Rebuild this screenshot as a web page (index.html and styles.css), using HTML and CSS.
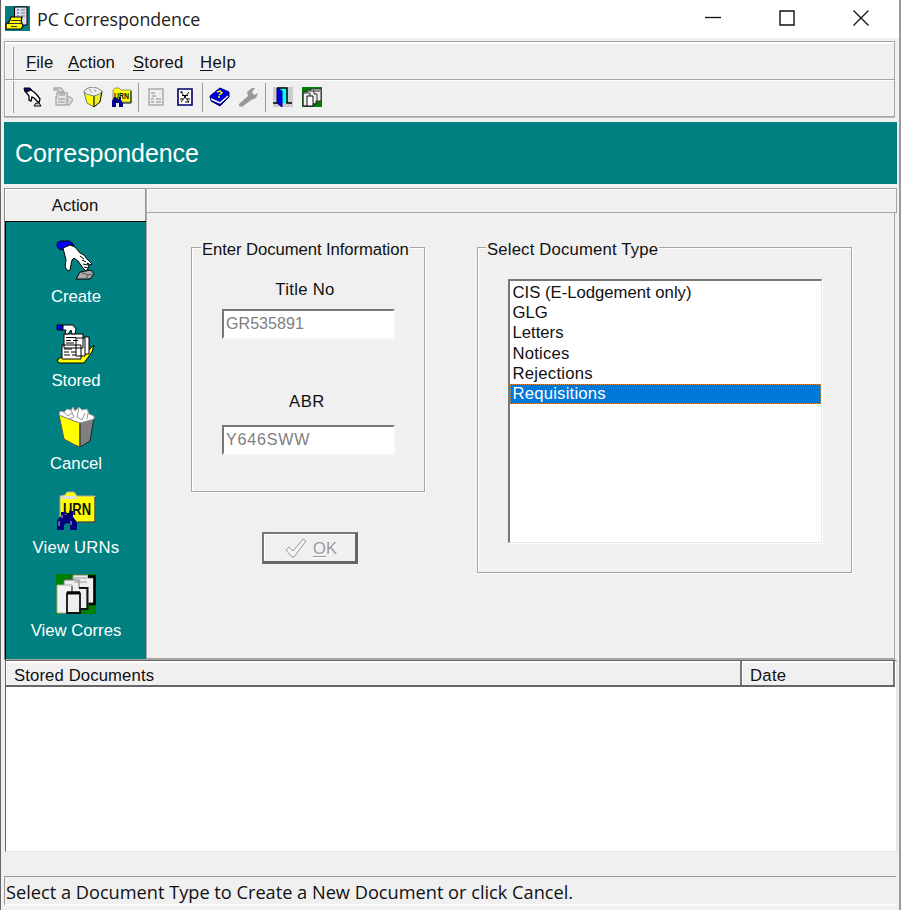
FILE: index.html
```html
<!DOCTYPE html>
<html lang="en">
<head>
<meta charset="utf-8">
<title>PC Correspondence</title>
<link rel="stylesheet" href="styles.css">
</head>
<body>
<svg class="defs" width="0" height="0">
  <defs>
    <symbol id="hand" viewBox="0 0 40 40">
      <path d="M1 5Q1 1 6 1H13Q18 3 18 6L14 5L8 8L6 10Q1 9 1 5Z" fill="#00f" stroke="#000"/>
      <path d="M7 8L14 5L19 7L24 13L28 15L31 19L36 24L35 25L31 23L33 27L30 31L27 28L22 21L18 18L16 20L14 30L12 31L9 27L10 20Z" fill="#fff" stroke="#000"/>
      <path d="M24 16L28 19M26 20L30 22M27 24L31 25M28 27L32 28" stroke="#000" fill="none"/>
      <path d="M24 32L35 30L38 34L34 39H20Z" fill="#aaa" stroke="#000"/>
      <path d="M24 32L32 35L38 34M32 35L30 39" fill="none" stroke="#555"/>
    </symbol>
    <symbol id="stored" viewBox="0 0 40 40">
      <path d="M1 36L7 32H26L38 21L36 28L28 39H3Z" fill="#ff0" stroke="#000"/>
      <path d="M24 13H33V30H24Z" fill="#fff" stroke="#000"/>
      <path d="M20 14H29V32H20ZM8 10H27V24H8ZM6 21H25V35H6Z" fill="#fff" stroke="#000"/>
      <path d="M10 13.500H20M10 16.500H15M17 16.500H22M10 19H18M8 25H16M8 28H13M15 28H20M8 31H14M16 31H20" stroke="#000" fill="none"/>
      <path d="M1 1H7V6H1Z" fill="#00f" stroke="#000"/>
      <path d="M7 1H17L20 5L19 10H16L15 6L12 10H9L10 6H7Z" fill="#fff" stroke="#000"/>
    </symbol>
    <symbol id="bin" viewBox="0 0 40 40">
      <path d="M3 8L24 16V40L19 38L8 32Z" fill="#ff0" stroke="#555"/>
      <path d="M24 16L38 11L34 34L24 40Z" fill="#808080" stroke="#222"/>
      <path d="M3 8L4 4L8 5L11 2L15 3L17 0L19 4L23 0L26 3L31 2L33 7L38 9L38 12L24 16Z" fill="#fff" stroke="#999"/>
      <path d="M8 5L12 9L16 6M15 3L18 10L13 12M23 1L21 10L26 13L29 6M32 6L31 12" fill="none" stroke="#999"/>
    </symbol>
    <symbol id="urn" viewBox="0 0 40 40">
      <path d="M4 30V5L9 4L11 1H18L21 5H39V31H25" fill="#ff0" stroke="#aaa"/>
      <path d="M5 5H20L22 8H6Z" fill="#ddd"/>
      <path d="M39 6V31H22" fill="none" stroke="#222"/>
      <text x="7" y="24" font-size="16" textLength="28" lengthAdjust="spacingAndGlyphs">URN</text>
      <path d="M5 21H9V24H13V20H17V26L21 31V39H14V33L11 32L8 34V39H1V29L5 25Z" fill="#00007d"/>
      <path d="M3 30V35M15 30V34M6 24V27" stroke="#bbf"/>
    </symbol>
    <symbol id="pages" viewBox="0 0 40 40">
      <path d="M0 0H40V40H0Z" fill="#008000"/>
      <path d="M17 1H32V4H38V29H22V8H17Z" fill="#eee" stroke="#888"/>
      <path d="M32 2.500H38.500V30H33" fill="none" stroke="#000" stroke-width="2.500"/>
      <path d="M8 6H23V14H31V35H8Z" fill="#eee" stroke="#777"/>
      <path d="M23 14H31.500V35H25" fill="none" stroke="#111" stroke-width="2"/>
      <path d="M16 4H31M18 8H31" stroke="#999"/>
      <path d="M1 11H16V39H1Z" fill="#f2f2f2" stroke="#aaa"/>
      <path d="M16 12V19" stroke="#333"/>
      <path d="M11 19.500H24V39H11Z" fill="#eee" stroke="#111" stroke-width="1.800"/>
      <path d="M11 18.500H24" stroke="#000" stroke-width="2.500"/>
    </symbol>
    <symbol id="minihand" viewBox="0 0 20 20">
      <path d="M1 1H7L9 3L5 5H2Z" fill="#00008b" stroke="#000"/>
      <path d="M3 5L8 3L11 5L14 8L17 12L16 16L13 13L11 11L9 10L8 14L6 13V9Z" fill="#fff" stroke="#000" stroke-width="1.3"/>
      <path d="M13 16H16L18 19H11Z" fill="#ccc" stroke="#000"/>
    </symbol>
  </defs>
</svg>
<div class="window">
  <header class="titlebar">
    <svg class="appicon" viewBox="0 0 25 25">
      <path d="M0 0H25V25H0Z" fill="#087d80"/>
      <path d="M9.500 1H22V19H9.500Z" fill="#dde" stroke="#000"/>
      <path d="M12 4H14M12 7H14M12 10H14" stroke="#44d"/><path d="M16 4H20M16 7H20M16 10H20" stroke="#777"/>
      <path d="M6 11H17L16 15L18 20L16 23H1V18L4 16Z" fill="#ff0" stroke="#000" stroke-width="1.2"/>
      <path d="M6 14.500H15M2 17.500H17M6 20.500H12" stroke="#333"/>
    </svg>
    <span class="title">PC Correspondence</span>
    <span class="controls">
      <svg width="16" height="16"><path d="M0 7.5H16" stroke="#111" stroke-width="1.3"/></svg>
      <svg width="16" height="16"><path d="M1 1H15V15H1Z" fill="none" stroke="#111" stroke-width="1.4"/></svg>
      <svg width="16" height="16"><path d="M.5 .5L15.5 15.5M15.5 .5L.5 15.5" stroke="#111" stroke-width="1.3"/></svg>
    </span>
  </header>
  <div class="bars">
    <nav class="menu"><i class="grip"></i><span class="m1"><u>F</u>ile</span><span class="m2"><u>A</u>ction</span><span class="m3"><u>S</u>tored</span><span class="m4"><u>H</u>elp</span></nav>
    <div class="tools"><i class="grip"></i>
      <svg class="t1"><use href="#minihand"/></svg>
      <svg class="t2" viewBox="0 0 20 20"><path d="M1 1H8L11 5H6L5 3H1ZM4 6H14V18H3V10H4ZM14 9L17 10L20 13L16 18H14" fill="#e5e5e5" stroke="#aaa" stroke-width="1.4"/><path d="M6 8H12M5 12H12M5 15H12M15 12V15" stroke="#aaa" stroke-width="1.4"/></svg>
      <svg class="t3" viewBox="0 0 20 20"><path d="M1 5L11 9V20L4 16Z" fill="#ff0" stroke="#776"/><path d="M11 9L19 4L17 15L11 20Z" fill="#ee2" stroke="#000"/><path d="M1 4L5 1L10 0L14 1L19 4L17 7L11 9L3 7Z" fill="#eee" stroke="#888"/><path d="M6 2L9 6M11 2L13 5" stroke="#999"/></svg>
      <svg class="t4" viewBox="0 0 21 20"><path d="M2 3L4 1H8L10 3H20V15H2Z" fill="#ff0" stroke="#997"/><path d="M20 4V16H11" stroke="#000" fill="none"/><text x="3" y="12" font-size="9" textLength="15" lengthAdjust="spacingAndGlyphs">URN</text><path d="M3 10H5V12H8V10H10V13L12 16V20H8V16H5V20H1V14Z" fill="#00008b"/></svg>
      <i class="sep"></i>
      <svg class="t5" viewBox="0 0 16 18"><path d="M1 1H15V17H1Z" fill="#eee" stroke="#aaa" stroke-width="1.5"/><path d="M3 5H7M4 8H8M3 11H6M8 11H13M3 14H6M8 14H13" stroke="#aaa" stroke-width="1.3"/></svg>
      <svg class="t6" viewBox="0 0 16 18"><path d="M1 1H15V17H1Z" fill="#fff" stroke="#00006b" stroke-width="1.600"/><path d="M3 4H6M5 7.500H11M3 11H6M10 11H13M8 14H12M4 4L12 14M12 4L4 14" stroke="#000"/></svg>
      <i class="sep"></i>
      <svg class="t7" viewBox="0 0 21 20"><path d="M1 9L11 1L20 5V10L11 19L2 14Z" fill="#0000b8" stroke="#000060"/><path d="M2 12L11 16L19 9" fill="none" stroke="#fff" stroke-width="1.400"/><path d="M1 9L11 1L20 5L11 14Z" fill="#0000dd"/><path d="M8 5L11 4L13 6L10 8M9 10H11" stroke="#ff0" stroke-width="1.5" fill="none"/></svg>
      <svg class="t8" viewBox="0 0 21 20"><path d="M1 17L10 9L9 5L14 1H17L14 5L16 8L20 6L18 11L13 13L4 20L1 19Z" fill="#999"/></svg>
      <i class="sep"></i>
      <svg class="t9" viewBox="0 0 20 20"><path d="M0 0H20V20H0Z" fill="#ccc"/><path d="M4 1H14V16H4Z" fill="#0ff"/><path d="M4 1H14V16H19M0 16H5" fill="none" stroke="#000" stroke-width="1.5"/><path d="M4 1L9 4V20L4 16Z" fill="#00d" stroke="#000080"/></svg>
      <svg class="t10" viewBox="0 0 20 20"><path d="M0 0H20V20H0Z" fill="#008000"/><path d="M9 2H19V14H14V17H11V19H1V5H5V3H9Z" fill="#eee" stroke="#333"/><path d="M1 6H8V19H1ZM5 4H12V7H15V17H11M11 4H18" fill="none" stroke="#333"/><path d="M5 9H11V19H5Z" fill="#fff" stroke="#111"/></svg>
    </div>
  </div>
  <div class="banner"><span>Correspondence</span></div>
  <main class="main">
    <aside class="side">
      <div class="sidehead"><span>Action</span></div>
      <div class="sidebody">
        <div class="act"><svg><use href="#hand"/></svg><span>Create</span></div>
        <div class="act"><svg><use href="#stored"/></svg><span>Stored</span></div>
        <div class="act"><svg><use href="#bin"/></svg><span>Cancel</span></div>
        <div class="act"><svg><use href="#urn"/></svg><span class="w4">View URNs</span></div>
        <div class="act"><svg><use href="#pages"/></svg><span>View Corres</span></div>
      </div>
    </aside>
    <section class="content">
      <div class="strip"></div>
      <div class="form">
        <div class="left">
          <div class="group info">
            <div class="legend"><span>Enter Document Information</span></div>
            <span class="lab l1">Title No</span>
            <div class="input"><span>GR535891</span></div>
            <span class="lab l2">ABR</span>
            <div class="input"><span class="abr">Y646SWW</span></div>
          </div>
          <div class="ok"><svg width="22" height="20" viewBox="0 0 22 20"><path d="M1 12L4 9L8 13L18 1L21 3L9 19H7Z" fill="#f4f4f4" stroke="#999"/></svg><span><u>O</u>K</span></div>
        </div>
        <div class="group types">
          <div class="legend"><span class="sel">Select Document Type</span></div>
          <div class="list">
            <div><span>CIS (E-Lodgement only)</span></div>
            <div><span>GLG</span></div>
            <div><span>Letters</span></div>
            <div><span class="notices">Notices</span></div>
            <div><span class="rej">Rejections</span></div>
            <div class="on"><span>Requisitions</span></div>
          </div>
        </div>
      </div>
    </section>
  </main>
  <div class="table">
    <div class="thead"><div class="th1"><span>Stored Documents</span></div><div class="th2"><span>Date</span></div></div>
  </div>
  <footer class="status"><span>Select a Document Type to Create a New Document or click Cancel.</span></footer>
</div>
</body>
</html>
```
FILE: styles.css
```css
* { box-sizing: border-box; }
body { margin: 0; width: 904px; height: 910px; overflow: hidden; background: #fff; font: 16.7px/20px "Liberation Sans", Arial, sans-serif; color: #111; }
span { white-space: nowrap; }
svg { display: block; flex: none; }
.defs { position: absolute; }
.window { width: 901px; height: 910px; background: #f0f0f0; border-left: 1px solid #666; border-right: 2px solid #999; padding-left: 3px; display: flex; flex-direction: column; }
.titlebar { height: 38px; flex: none; margin-left: -2px; background: #fff; display: flex; align-items: center; padding: 0 30px 0 3px; }
.appicon { width: 25px; height: 25px; margin-bottom: 2px; }
.title { margin: 0 0 1px 7px; font-family: "Open Sans", "Noto Sans", sans-serif; font-size: 17.8px; letter-spacing: -.05px; color: #222; }
.controls { margin-left: auto; display: flex; gap: 58px; margin-bottom: 2px; }

.bars { margin: 3px 0 5px; width: 891px; height: 76px; flex: none; border: 1px solid #a5a5a5; box-shadow: inset 1px 2px #fff, 0 1px #bbb; }
.menu, .tools { display: flex; align-items: center; padding-left: 7px; }
.menu { height: 38px; border-bottom: 1px solid #a5a5a5; padding-top: 4px; }
.tools { height: 36px; border-top: 1px solid #fff; padding-bottom: 3px; }
.grip { width: 2px; height: 32px; border-left: 1px solid #fff; border-right: 1px solid #999; }
.m1 { margin-left: 12px; width: 42px; letter-spacing: .1px; }
.m2 { width: 65px; letter-spacing: .1px; }
.m3 { width: 67px; letter-spacing: .2px; }
.m4 { letter-spacing: .5px; }
u { text-underline-offset: 2px; text-decoration-thickness: 1px; }
.tools svg { width: 20px; height: 20px; }
.tools .t1 { margin-left: 9px; }
.tools .t2 { margin-left: 10px; }
.tools .t3 { margin-left: 10px; }
.tools .t4 { margin-left: 8px; width: 21px; }
.sep { width: 1px; height: 29px; margin-left: 6px; background: #999; }
.tools .t5 { width: 16px; height: 18px; margin-left: 9px; }
.tools .t6 { width: 16px; height: 18px; margin-left: 13px; }
.t6 + .sep { margin-left: 9px; }
.tools .t7 { width: 21px; margin-left: 6px; }
.tools .t8 { width: 21px; margin-left: 8px; }
.tools .t9 { margin-left: 7px; }
.tools .t10 { margin-left: 9px; }

.banner { height: 62px; width: 893px; flex: none; background: teal; color: #fff; padding: 15px 0 0 11px; font-size: 25px; line-height: 32px; letter-spacing: -.07px; }
.main { display: flex; height: 472px; flex: none; margin-top: 4px; }
.side { width: 143px; display: flex; flex-direction: column; border-right: 1px solid #aaa; border-left: 1px solid #888; }
.sidehead { height: 33px; border-top: 1px solid #999; border-right: 1px solid #999; box-shadow: inset 1px 1px #fff; text-align: center; padding-top: 7px; }
.sidebody { flex: 1; background: teal; border-top: 1px solid #000; border-left: 1px solid #000; border-bottom: 1px solid #aaa; color: #fff; padding-top: 18px; }
.act { height: 83.6px; display: flex; flex-direction: column; align-items: center; }
.act svg { width: 40px; height: 40px; margin-bottom: 7px; }
.w4 { letter-spacing: .2px; }
text { font-family: "Liberation Sans", sans-serif; font-weight: bold; fill: #111; }
.content { width: 750px; display: flex; flex-direction: column; }
.strip { height: 25px; border: 1px solid #a5a5a5; border-left: 0; box-shadow: inset 1px 1px #fff; }
.form { flex: 1; width: 748px; border-right: 1px solid #a5a5a5; border-bottom: 2px solid #a5a5a5; display: flex; align-items: flex-start; gap: 52px; padding: 34px 0 0 44px; }
.left { width: 234px; display: flex; flex-direction: column; }
.group { border: 1px solid #a5a5a5; box-shadow: 1px 1px #fff, inset 1px 1px #fff; display: flex; flex-direction: column; }
.legend { height: 20px; margin-top: -8px; padding-left: 9px; }
.legend span { display: inline-block; background: #f0f0f0; height: 20px; padding: 0 1px; letter-spacing: -.08px; }
.legend .sel { letter-spacing: .18px; margin-left: -1px; }
.info { height: 245px; }
.lab { align-self: center; }
.l1 { margin: 20px 6px 0 0; height: 29px; letter-spacing: .3px; }
.l2 { margin: 53px 2px 0 0; height: 33px; letter-spacing: .5px; }
.input { width: 173px; height: 30px; flex: none; margin-left: 30px; background: #fff; border: 2px solid #777; border-right: 2px solid #fafafa; border-bottom: 2px solid #fafafa; padding: 2px 0 0 2px; color: #808080; font-size: 16.1px; }
.input + .l2 { margin-top: 53px; }
.abr { letter-spacing: .8px; }
.ok { width: 96px; height: 32px; margin: 40px 0 0 71px; border: 2px solid #777; border-right-width: 3px; border-bottom-width: 3px; border-right-color: #666; border-bottom-color: #666; display: flex; align-items: center; padding-left: 21px; gap: 6px; color: #999; box-shadow: inset 1px 1px #fff; }
.ok span { margin-top: 3px; text-shadow: 1px 1px #fff; }
.types { width: 375px; height: 326px; }
.list { margin: 19px 0 0 30px; width: 314px; height: 264px; background: #fff; border: 2px solid #777; border-right: 1px solid #e8e8e8; border-bottom: 1px solid #e8e8e8; box-shadow: 1px 1px #fff; padding-top: 2px; }
.list div { height: 20.2px; padding-left: 2.5px; }
.notices { letter-spacing: .2px; }
.rej { letter-spacing: .25px; }
.list .on { height: 20px; background: #0078d7; color: #fff; outline: 1px dotted #e58a35; outline-offset: -1px; letter-spacing: .2px; }

.table { margin-left: 1px; width: 892px; height: 192px; flex: none; background: #fff; border-left: 1px solid #666; border-top: 1px solid #666; border-bottom: 1px solid #e3e3e3; border-right: 1px solid #e3e3e3; }
.thead { display: flex; height: 26px; width: 889px; background: #f0f0f0; border-bottom: 2px solid #666; }
.th1 { width: 736px; border-right: 2px solid #777; letter-spacing: .12px; }
.th2 { flex: 1; border-right: 2px solid #777; letter-spacing: .3px; }
.th1, .th2 { padding: 5px 0 0 8px; box-shadow: inset 1px 2px #fff; line-height: 19px; }
.status { margin-top: 24px; width: 892px; height: 30px; flex: none; border-top: 1px solid #999; border-left: 1px solid #999; border-bottom: 2px solid #fafafa; font-family: "Open Sans", "Noto Sans", sans-serif; font-size: 18.2px; line-height: 30px; padding-left: 1px; letter-spacing: 0; }
```
